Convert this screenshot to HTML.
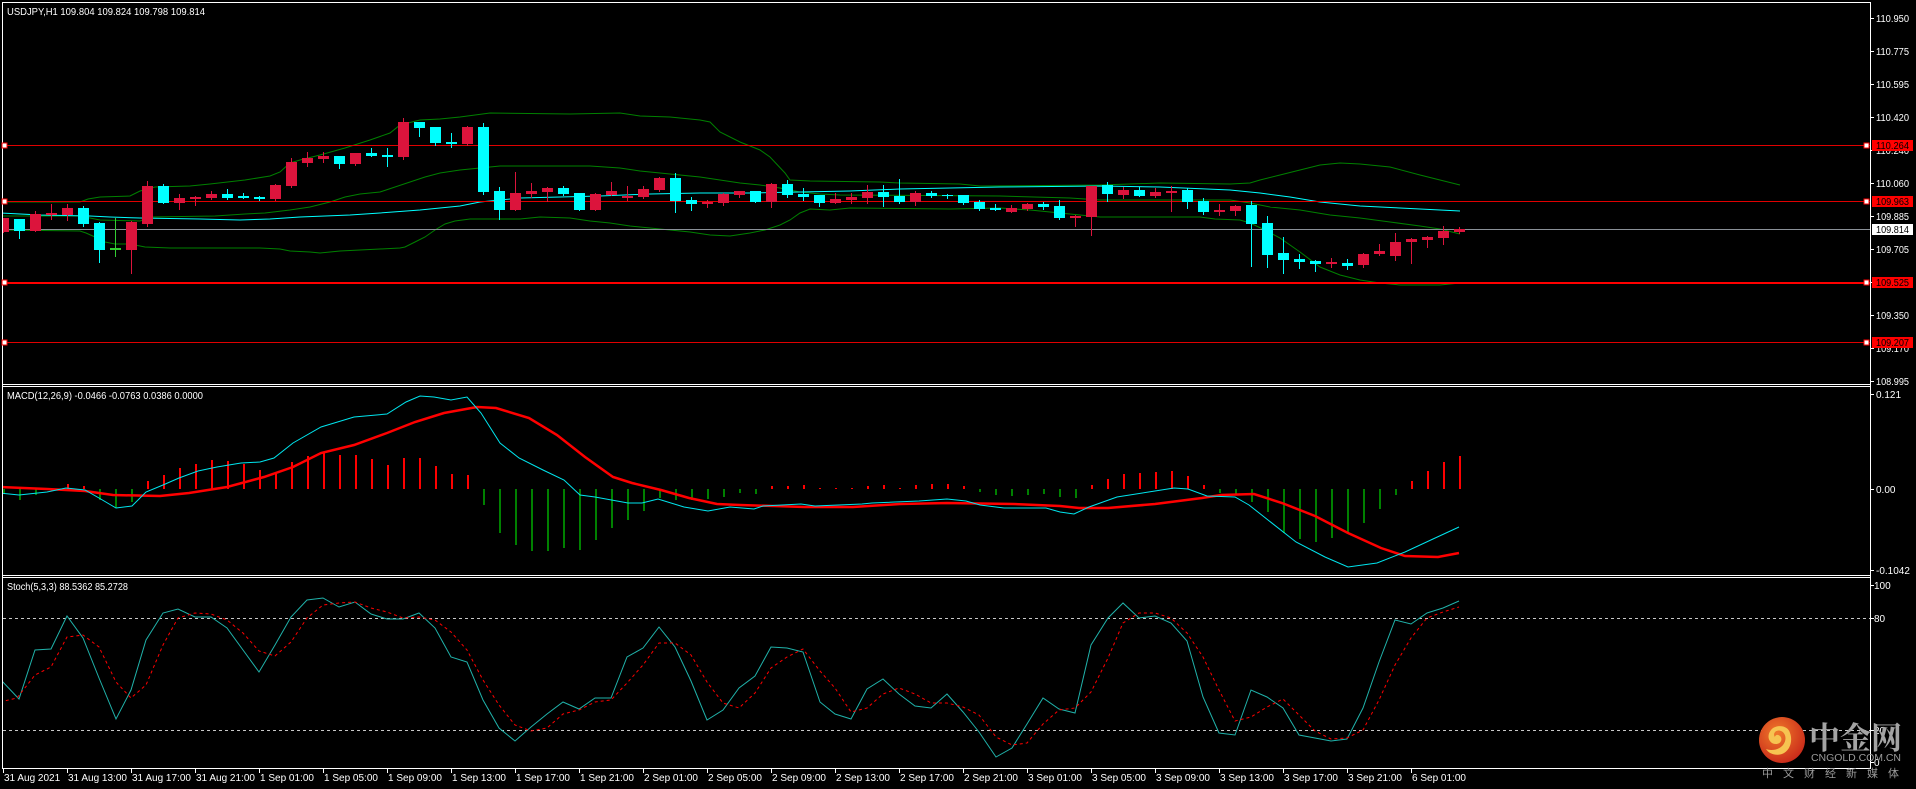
<!DOCTYPE html>
<html><head><meta charset="utf-8">
<style>
html,body{margin:0;padding:0;background:#000;}
body{width:1916px;height:789px;overflow:hidden;position:relative;}
svg{position:absolute;left:0;top:0;}
text{font-family:"Liberation Sans","Noto Sans CJK SC",sans-serif;font-size:10px;fill:#fff;}
</style></head>
<body>
<svg id="s" width="1916" height="789" viewBox="0 0 1916 789" xmlns="http://www.w3.org/2000/svg" shape-rendering="crispEdges">
<defs>
<clipPath id="cm"><rect x="3" y="3" width="1867" height="380"/></clipPath>
<clipPath id="cd"><rect x="3" y="387" width="1867" height="188"/></clipPath>
<clipPath id="cs"><rect x="3" y="579" width="1867" height="188"/></clipPath>
<radialGradient id="lg" cx="0.4" cy="0.35" r="0.7"><stop offset="0" stop-color="#f07a2a"/><stop offset="1" stop-color="#c8281a"/></radialGradient>
</defs>
<rect x="0" y="0" width="1916" height="789" fill="#000"/>
<g stroke="#fff" stroke-width="1" fill="none">
<line x1="2.5" y1="2.5" x2="1870.5" y2="2.5"/>
<line x1="2.5" y1="2" x2="2.5" y2="769"/>
<line x1="1870.5" y1="2" x2="1870.5" y2="769"/>
<line x1="2" y1="384.5" x2="1871" y2="384.5"/>
<line x1="2" y1="386.5" x2="1871" y2="386.5"/>
<line x1="2" y1="575.5" x2="1871" y2="575.5"/>
<line x1="2" y1="577.5" x2="1871" y2="577.5"/>
<line x1="2" y1="768.5" x2="1871" y2="768.5"/>
</g>
<g id="main" clip-path="url(#cm)"></g>
<g id="macd" clip-path="url(#cd)"></g>
<g id="sto" clip-path="url(#cs)"></g>
<g id="axis"></g>
<text x="7" y="15" textLength="198" lengthAdjust="spacingAndGlyphs">USDJPY,H1  109.804 109.824 109.798 109.814</text>
<text x="7" y="399" textLength="196" lengthAdjust="spacingAndGlyphs">MACD(12,26,9) -0.0466 -0.0763 0.0386 0.0000</text>
<text x="7" y="590" textLength="121" lengthAdjust="spacingAndGlyphs">Stoch(5,3,3) 88.5362 85.2728</text>
<g shape-rendering="auto">
<circle cx="1782" cy="740" r="23" fill="url(#lg)"/>
<path d="M1790 733c-2-8-14-9-19-3c-5 6-2 14 5 14c5 0 7-5 4-8c-2-2-5-1-5 1c-3-4 2-8 6-6c5 2 6 9 2 14c-4 5-12 6-17 4c3 5 10 7 16 5c8-3 11-13 8-21z" fill="#f6c451"/>
<text x="1809" y="749" style="font-family:'Noto Serif CJK SC','Noto Sans CJK SC',serif;font-size:31px;font-weight:bold;fill:#a3a3a3" textLength="93">中金网</text>
<text x="1811" y="761" style="font-size:10.5px;fill:#9a9a9a" textLength="90">CNGOLD.COM.CN</text>
<text x="1762" y="777" style="font-family:'Noto Sans CJK SC',sans-serif;font-size:11px;fill:#9a9a9a" textLength="137">中 文 财 经 新 媒 体</text>
</g>
</svg>
<script>
var NS="http://www.w3.org/2000/svg";
function el(p,t,a,txt){var e=document.createElementNS(NS,t);for(var k in a)e.setAttribute(k,a[k]);if(txt!==undefined)e.textContent=txt;document.getElementById(p).appendChild(e);return e;}
function pl(p,pts,col,w,dash){el(p,"polyline",{points:pts.map(function(q){return q.join(",")}).join(" "),fill:"none",stroke:col,"stroke-width":w,"stroke-dasharray":dash||"","shape-rendering":"auto"});}
var up=[[0,202],[80,202],[88,199],[100,197],[130,196],[140,191],[155,187],[190,186],[210,184],[245,180],[270,176],[280,172],[290,163],[300,160],[320,155],[345,148],[370,140],[390,133],[400,125],[420,120],[440,119],[460,117],[490,113],[570,114],[620,113],[640,116],[670,117],[700,120],[710,122],[720,132],[740,142],[760,150],[770,157],[785,173],[790,180],[810,181],[880,182],[900,183],[960,184],[980,186],[1100,185],[1160,183],[1230,184],[1250,183],[1260,180],[1280,175],[1300,170],[1320,165],[1340,163],[1360,164],[1390,167],[1420,175],[1440,180],[1460,185]];
var mid=[[0,216],[80,216],[100,220],[140,221],[150,217],[215,216],[245,214],[265,213],[290,210],[310,207],[330,202],[345,197],[360,194],[380,192],[395,187],[410,182],[425,177],[440,173],[460,170],[480,168],[500,166],[590,166],[620,168],[640,171],[660,173],[680,175],[700,177],[720,180],[740,183],[760,185],[780,188],[800,192],[820,194],[840,195],[1000,196],[1070,198],[1100,200],[1230,200],[1250,203],[1270,207],[1300,210],[1330,215],[1360,218],[1390,222],[1420,226],[1440,229],[1460,234]];
var lo=[[0,230],[80,231],[86,233],[95,237],[105,242],[115,244],[130,244],[145,247],[170,248],[260,248],[280,249],[290,251],[310,252],[320,253],[340,251],[380,249],[400,248],[405,247],[415,242],[425,237],[435,230],[445,224],[455,221],[470,219],[520,219],[540,217],[570,218],[590,221],[610,223],[630,226],[650,228],[670,230],[690,232],[710,235],[730,236],[750,233],[765,230],[780,225],[790,220],[800,213],[810,209],[830,210],[850,208],[950,209],[1000,208],[1030,210],[1050,212],[1080,215],[1100,217],[1200,217],[1215,219],[1240,220],[1250,223],[1265,230],[1280,238],[1300,252],[1320,267],[1340,275],[1360,280],[1380,283],[1400,285],[1440,285],[1460,283]];
var ma=[[0,213],[40,215],[90,216],[110,217],[140,218],[200,219],[240,220],[270,219],[300,217],[350,215],[380,213],[420,210],[460,206],[480,202],[520,198],[560,197],[600,196],[650,194],[700,193],[750,193],[800,192],[850,191],[900,189],[950,188],[1000,187],[1100,186],[1160,187],[1230,190],[1260,193],[1290,197],[1320,202],[1360,206],[1400,208],[1460,211]];
pl("main",up,"#008000",1);pl("main",mid,"#008000",1);pl("main",lo,"#008000",1);pl("main",ma,"#00ffff",1);
[[145,"#e00000"],[201,"#e00000"],[342,"#e00000"]].forEach(function(h){el("main","rect",{x:3,y:h[0],width:1867,height:1,fill:h[1]});});
el("main","rect",{x:3,y:282,width:1867,height:2,fill:"#ff0000"});
el("main","rect",{x:3,y:229,width:1867,height:1,fill:"#8a9098"});
var C=[["r",218,232,218,232],["a",219,231,219,238],["r",214,231,211,231],["r",213,215,204,219],["r",208,215,204,220],["a",208,224,206,226],["a",223,250,222,262],["g",248,250,218,256],["r",222,250,221,273],["r",186,224,181,226],["a",186,203,184,203],["r",198,203,194,209],["r",197,199,196,205],["r",194,198,191,199],["a",194,198,189,199],["a",196,198,193,198],["a",197,199,196,200],["r",185,199,184,200],["r",162,186,158,187],["r",158,163,152,166],["r",156,159,152,162],["a",156,164,156,168],["r",153,164,153,165],["a",153,156,148,156],["a",155,157,148,166],["r",122,157,118,159],["a",122,128,122,136],["a",127,143,127,145],["a",142,144,133,147],["r",127,144,126,145],["a",127,192,123,194],["a",191,210,187,219],["r",193,210,172,210],["r",191,194,183,197],["r",188,192,187,201],["a",188,194,186,195],["a",193,210,193,210],["r",194,210,193,210],["r",191,195,182,195],["r",196,198,186,200],["r",189,197,186,198],["r",178,190,177,191],["a",178,201,173,212],["a",200,204,197,210],["r",202,204,200,207],["r",194,203,193,205],["r",191,195,191,197],["a",191,202,191,202],["r",184,202,183,207],["a",184,195,180,197],["a",194,197,188,200],["a",195,203,195,206],["r",199,203,193,203],["r",197,200,193,203],["r",192,198,185,203],["a",192,197,185,206],["a",196,202,179,203],["r",193,202,191,205],["a",193,196,191,197],["a",195,196,194,198],["a",195,203,195,204],["a",202,209,200,210],["a",208,210,204,210],["r",208,212,205,212],["r",204,209,203,210],["a",204,207,202,209],["a",206,218,200,219],["r",216,218,215,226],["r",186,217,186,235],["a",185,194,182,201],["r",190,195,187,198],["a",190,196,187,196],["r",192,196,188,197],["r",191,193,186,211],["a",190,202,188,208],["a",201,212,198,214],["r",210,212,204,215],["r",206,211,205,215],["a",205,224,201,266],["a",223,255,216,267],["a",253,260,237,273],["a",259,262,254,268],["a",261,264,260,271],["r",262,264,258,267],["a",263,266,259,269],["r",254,265,253,267],["r",251,254,244,255],["r",242,256,233,260],["r",239,242,238,263],["r",237,240,236,247],["r",231,238,226,244],["r",229,232,227,233]];
var col={r:"#dc143c",a:"#00ffff",g:"#32cd32"};
C.forEach(function(c,k){var x=16*k;var f=col[c[0]];
 el("main","rect",{x:x+3,y:c[3],width:1,height:c[4]-c[3]+1,fill:f});
 el("main","rect",{x:x-2,y:c[1],width:11,height:Math.max(1,c[2]-c[1]),fill:f});});
var H=[493,500,495,489,484,486,500,508,502,481,475,468,464,460,461,464,470,472,462,456,452,455,455,459,465,458,458,466,474,475,505,533,545,551,551,548,550,540,528,520,511,498,500,500,499,497,493,494,486,486,485,488,488,488,486,485,488,485,484,484,486,492,495,496,495,494,497,498,485,479,474,473,472,471,476,485,493,495,502,512,533,539,542,538,534,523,509,495,481,471,462,456];
H.forEach(function(y,k){var x=16*k+3;if(y==489)return;var t=Math.min(y,489),b=Math.max(y,489);el("macd","rect",{x:x,y:t,width:2,height:b-t,fill:y>489?"#008000":"#ff0000"});});
var mc=[[0,493],[19,495],[47,492],[66,488],[85,490],[99,498],[116,508],[132,506],[146,492],[163,485],[179,478],[198,471],[217,467],[241,463],[260,462],[274,458],[293,443],[321,427],[354,417],[387,414],[406,402],[420,396],[434,397],[451,400],[467,397],[481,413],[500,443],[519,458],[543,470],[564,480],[580,495],[595,497],[628,503],[642,503],[658,499],[684,507],[708,511],[730,507],[754,509],[763,506],[801,504],[815,506],[862,504],[872,503],[919,501],[947,499],[966,501],[980,505],[1004,508],[1046,508],[1060,512],[1074,514],[1089,507],[1117,497],[1155,491],[1174,488],[1188,489],[1207,496],[1235,497],[1249,505],[1268,520],[1296,542],[1325,557],[1348,567],[1377,563],[1405,552],[1433,539],[1459,527]];
var ms=[[0,487],[47,489],[85,491],[113,495],[160,496],[189,493],[227,487],[264,477],[293,467],[321,453],[354,445],[387,433],[415,422],[444,413],[477,407],[496,408],[529,418],[557,435],[585,457],[613,477],[632,483],[661,490],[689,498],[717,504],[740,505],[805,507],[853,507],[900,504],[947,503],[1013,504],[1060,506],[1079,508],[1108,508],[1155,504],[1202,498],[1221,495],[1254,494],[1282,503],[1315,516],[1348,533],[1381,548],[1405,556],[1438,557],[1459,553]];
pl("macd",ms,"#ff0000",2.5);pl("macd",mc,"#00e5ee",1);
el("sto","line",{x1:3,y1:618.5,x2:1870,y2:618.5,stroke:"#c8c8c8","stroke-dasharray":"3,3"});
el("sto","line",{x1:3,y1:730.5,x2:1870,y2:730.5,stroke:"#c8c8c8","stroke-dasharray":"3,3"});
var sm=[[0,679],[19,699],[35,650],[51,649],[67,616],[83,638],[99,678],[116,719],[131,690],[146,640],[163,613],[178,609],[195,617],[211,617],[227,628],[243,650],[259,672],[275,645],[291,617],[307,600],[323,598],[339,607],[355,602],[371,614],[387,619],[403,619],[419,613],[435,628],[451,657],[467,662],[483,700],[499,728],[515,741],[531,727],[547,714],[563,702],[579,709],[595,698],[611,698],[627,657],[643,648],[659,627],[675,647],[691,681],[707,720],[723,710],[739,688],[755,676],[771,647],[787,648],[803,652],[820,702],[835,714],[851,719],[867,689],[883,679],[899,694],[915,706],[931,708],[947,694],[963,712],[979,732],[996,757],[1012,748],[1027,724],[1043,698],[1059,709],[1075,713],[1091,645],[1108,618],[1123,603],[1139,618],[1155,616],[1171,623],[1187,641],[1203,697],[1219,733],[1235,735],[1251,690],[1267,697],[1283,708],[1299,735],[1315,738],[1331,741],[1347,739],[1363,708],[1379,662],[1395,620],[1411,624],[1427,613],[1443,608],[1459,601]];
var ss=[[0,702],[17,698],[35,675],[51,667],[67,637],[83,635],[99,647],[116,682],[131,698],[146,685],[163,645],[178,618],[195,613],[211,614],[227,620],[243,633],[259,651],[275,656],[291,642],[307,618],[323,605],[339,603],[355,602],[371,608],[387,612],[403,618],[419,617],[435,620],[451,632],[467,650],[483,680],[499,705],[515,725],[531,731],[547,728],[563,714],[579,710],[595,702],[611,700],[627,683],[643,665],[659,643],[675,643],[691,655],[707,682],[723,703],[739,708],[755,693],[771,668],[787,657],[803,649],[820,671],[835,688],[851,712],[867,708],[883,694],[899,688],[915,694],[931,703],[947,703],[963,707],[979,715],[996,737],[1012,745],[1027,743],[1043,724],[1059,710],[1075,708],[1091,692],[1108,658],[1123,623],[1139,613],[1155,613],[1171,618],[1187,633],[1203,657],[1219,690],[1235,721],[1251,717],[1267,707],[1283,699],[1299,715],[1315,731],[1331,739],[1347,738],[1363,730],[1379,700],[1395,665],[1411,638],[1427,618],[1443,612],[1459,607]];
pl("sto",sm,"#20b2aa",1);pl("sto",ss,"#ff0000",1,"3,3");
var P=[["110.950",18],["110.775",51],["110.595",84],["110.420",117],["110.240",150],["110.060",183],["109.885",216],["109.705",249],["109.525",282],["109.350",315],["109.170",348],["108.995",381]];
P.forEach(function(p){el("axis","rect",{x:1871,y:p[1],width:3,height:1,fill:"#fff"});el("axis","text",{x:1876,y:p[1]+4,textLength:33,lengthAdjust:"spacingAndGlyphs"},p[0]);});
[["110.264",145],["109.963",201],["109.525",282],["109.207",342]].forEach(function(p){
 el("axis","rect",{x:1872,y:p[1]-5,width:41,height:11,fill:"#ff0000"});
 el("axis","text",{x:1876,y:p[1]+4,style:"fill:#000",textLength:33,lengthAdjust:"spacingAndGlyphs"},p[0]);
 el("axis","rect",{x:1864,y:p[1]-2,width:5,height:5,fill:"#fff",stroke:"#ff0000","stroke-width":1});
 el("axis","rect",{x:2,y:p[1]-2,width:5,height:5,fill:"#fff",stroke:"#ff0000","stroke-width":1});});
el("axis","rect",{x:1872,y:224,width:41,height:11,fill:"#fff"});
el("axis","text",{x:1876,y:233,style:"fill:#000",textLength:33,lengthAdjust:"spacingAndGlyphs"},"109.814");
[["0.121",394],["0.00",489],["-0.1042",570]].forEach(function(p){el("axis","rect",{x:1871,y:p[1],width:3,height:1,fill:"#fff"});el("axis","text",{x:1876,y:p[1]+4},p[0]);});
[["100",585],["80",618],["20",730],["0",762]].forEach(function(p){el("axis","rect",{x:1871,y:p[1],width:3,height:1,fill:"#fff"});el("axis","text",{x:1874,y:p[1]+4},p[0]);});
var T=["31 Aug 2021","31 Aug 13:00","31 Aug 17:00","31 Aug 21:00","1 Sep 01:00","1 Sep 05:00","1 Sep 09:00","1 Sep 13:00","1 Sep 17:00","1 Sep 21:00","2 Sep 01:00","2 Sep 05:00","2 Sep 09:00","2 Sep 13:00","2 Sep 17:00","2 Sep 21:00","3 Sep 01:00","3 Sep 05:00","3 Sep 09:00","3 Sep 13:00","3 Sep 17:00","3 Sep 21:00","6 Sep 01:00"];
T.forEach(function(t,i){var x=3+64*i;el("axis","rect",{x:x,y:769,width:1,height:4,fill:"#fff"});el("axis","text",{x:x+1,y:781},t);});
</script>
</body></html>
